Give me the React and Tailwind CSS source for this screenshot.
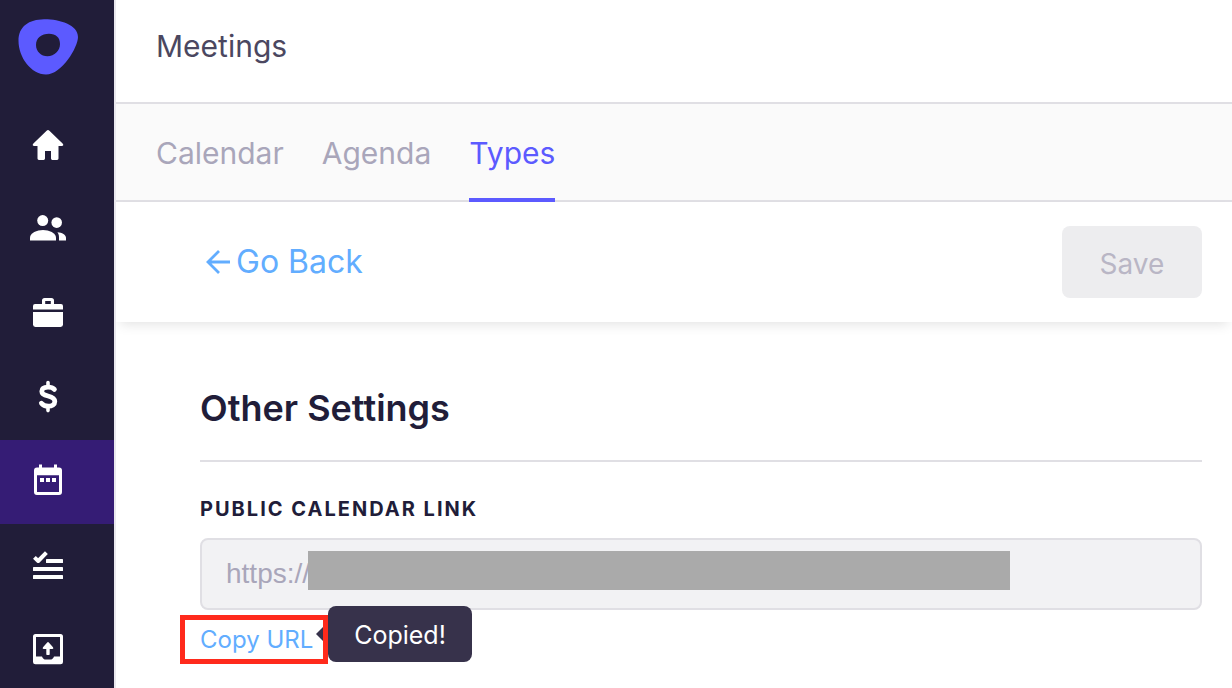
import { useState } from 'react';
import clsx from 'clsx';

const HomeIcon = () => (
    <path d="M16.6 2.7Q18 1.4 19.4 2.7L32.6 15.6Q34.4 17.9 31.6 18H28.5V30.6Q28.5 32 27.1 32H22.4Q21 32 21 30.6V23H15V30.6Q15 32 13.6 32H8.9Q7.5 32 7.5 30.6V18H4.4Q1.6 17.9 3.4 15.6Z" />
);

const PeopleIcon = () => (
    <>
        <circle cx="12.7" cy="8.6" r="5.5" />
        <circle cx="26.7" cy="10.6" r="5.3" />
        <path d="M0 28.6V25.5C0 21 7 18 13 18S26 21 26 25.5V28.6Z" />
        <path d="M27.4 20.3C32 20.6 36 22.8 36 25.8V28.6H29V25.5C29 23.2 28.4 21.7 27.4 20.3Z" />
    </>
);

const BriefcaseIcon = () => (
    <>
        <path fillRule="evenodd" d="M14.6 2H21.4Q24 2 24 4.6V8H31Q33 8 33 10V13.6H3V10Q3 8 5 8H12V4.6Q12 2 14.6 2ZM15.2 5V8H20.8V5Z" />
        <path d="M3 16H33V28.6Q33 31 30.6 31H5.4Q3 31 3 28.6Z" />
    </>
);

const DollarIcon = () => (
    <g fill="none" stroke="currentColor" strokeLinecap="round">
        <path strokeWidth="4.8" d="M24.4 9.4C23 7.8 21 7.1 18 7.1C14 7.1 11.8 8.8 11.8 11.3C11.8 14.2 14.4 15.2 18 16C22 17 24.8 18.4 24.8 21.4C24.8 24.4 22 26.2 18.2 26.2C15.2 26.2 13 25.2 11.4 23.2" />
        <path strokeWidth="3.6" d="M18 2.6V6M18 27V30.6" />
    </g>
);

const CalendarIcon = () => (
    <>
        <path fillRule="evenodd" d="M9 0.5H12V3.5H24V0.5H27V3.5H29Q32 3.5 32 6.5V28Q32 31 29 31H7Q4 31 4 28V6.5Q4 3.5 7 3.5H9ZM7 11.2V28H29V11.2Z" />
        <path d="M10 14H14V18H10ZM16 14H20V18H16ZM22 14H26V18H22Z" />
    </>
);

const ChecklistIcon = () => (
    <>
        <path fill="none" stroke="currentColor" strokeWidth="4" strokeLinejoin="round" d="M4.4 9.4L8.2 13L16.4 4.6" />
        <rect x="16" y="11" width="17" height="4" rx="0.6" />
        <rect x="3" y="19" width="30" height="4" rx="0.6" />
        <rect x="3" y="27" width="30" height="4" rx="0.6" />
    </>
);

const OutboxIcon = () => (
    <>
        <path fillRule="evenodd" d="M5.5 2H30.5Q33 2 33 4.5V30Q33 32.3 30.5 32.3H5.5Q3 32.3 3 30V4.5Q3 2 5.5 2ZM6 5V24.5H12C12.6 26.6 14 27.6 16 27.6H20C22 27.6 23.4 26.6 24 24.5H30V5Z" />
        <path d="M17.2 10.5Q18 9.7 18.8 10.5L23 15.2Q24 16.8 22.4 17H19.7V22.2Q19.7 23 19 23H17Q16.3 23 16.3 22.2V17H13.6Q12 16.8 13 15.2Z" />
    </>
);

const NAV_ITEMS = [
    { name: 'Home', Icon: HomeIcon },
    { name: 'People', Icon: PeopleIcon },
    { name: 'Accounts', Icon: BriefcaseIcon },
    { name: 'Opportunities', Icon: DollarIcon },
    { name: 'Meetings', Icon: CalendarIcon },
    { name: 'Tasks', Icon: ChecklistIcon },
    { name: 'Outbox', Icon: OutboxIcon },
];

const TABS = ['Calendar', 'Agenda', 'Types'];

const Sidebar = () => (
    <nav className="w-[116px] shrink-0 overflow-hidden border-r-2 border-[#e9e8ee] bg-[#211d39] text-white">
        <a href="#home" aria-label="Dashboard" className="flex h-[104px] pl-[18px] pt-[19px]">
            <svg viewBox="0 0 60 56" className="h-[56px] w-[60px]" fill="#5c5aff" fillRule="evenodd">
                <path d="M26 0.2C41 0 60 5.5 60 18C60 28 44 55.5 28 55.5C13 55.5 0.5 38 0.5 22C0.5 7 11 0.6 26 0.2ZM31 14.8C23.5 14.8 18 19 18 26C18 32.6 23.2 37.2 29.4 37.2C36.6 37.2 42 31.5 42 25C42 18.5 37.8 14.8 31 14.8Z" />
            </svg>
        </a>
        {NAV_ITEMS.map(({ name, Icon }) => (
            <a
                key={name}
                href={`#${name.toLowerCase()}`}
                aria-label={name}
                className={clsx('flex h-[84px] items-center pl-[30px]', name === 'Meetings' && 'bg-[#351c75]')}
            >
                <svg viewBox="0 0 36 36" className="h-9 w-9 overflow-visible" fill="currentColor">
                    <Icon />
                </svg>
            </a>
        ))}
    </nav>
);

export default function App() {
    const [tab, setTab] = useState('Types');
    const [copied, setCopied] = useState(true);

    return (
        <div className="flex h-screen overflow-hidden bg-white font-['Inter',sans-serif] text-[#211d39]">
            <Sidebar />

            <main className="min-w-0 flex-1 overflow-hidden">
                <header className="flex h-[104px] items-center border-b-2 border-[#e0dfe4] px-10 pb-2.5">
                    <h1 className="text-[30px] leading-9 text-[#4b4760]">Meetings</h1>
                </header>

                <div className="flex h-[98px] gap-[38px] border-b-2 border-[#e0dfe4] bg-[#fafafa] px-10">
                    {TABS.map((name) => (
                        <button
                            key={name}
                            type="button"
                            onClick={() => setTab(name)}
                            className={clsx(
                                '-mb-0.5 border-b-4 pt-1 text-[30px] leading-9',
                                name === tab ? 'border-[#5c5aff] text-[#5c5aff]' : 'border-transparent text-[#a9a6ba]'
                            )}
                        >
                            {name}
                        </button>
                    ))}
                </div>

                <div className="flex h-[120px] items-center justify-between pl-[90px] pr-[30px] shadow-[0_6px_12px_-4px_rgba(0,0,0,0.12)]">
                    <a href="#types" className="flex items-center gap-1.5 text-[32px] leading-9 text-[#62adff]">
                        <svg viewBox="0 0 24 24" className="h-6 w-6" fill="none" stroke="currentColor" strokeWidth="2.8">
                            <path d="M24 12H2M13 1L2 12L13 23" />
                        </svg>
                        Go Back
                    </a>
                    <button type="button" disabled className="h-[72px] w-[140px] rounded-lg bg-[#ededef] pt-1 text-[28px] text-[#b9b6c5]">
                        Save
                    </button>
                </div>

                <section className="pl-[84px] pr-[30px] pt-16">
                    <h2 className="border-b-2 border-[#e0dfe4] pb-[30px] text-[36px] font-semibold leading-11">Other Settings</h2>
                    <label htmlFor="calendar-link" className="mt-[33px] block text-[20px] font-bold uppercase leading-7 tracking-widest">
                        Public Calendar Link
                    </label>
                    <div className="relative mt-[15px]">
                        <input
                            id="calendar-link"
                            readOnly
                            value="https://"
                            className="block h-[72px] w-full rounded-lg border-2 border-[#e0dfe4] bg-[#f2f2f4] px-6 font-['Liberation_Sans',sans-serif] text-[28px] text-[#a9a6ba]"
                        />
                        <div className="absolute left-[108px] right-[192px] top-[13px] h-[39px] bg-[#aaaaaa]" />
                    </div>

                    <div className="relative mt-3 w-[128px]">
                        {copied && (
                            <div role="status" className="absolute -top-4 left-full flex h-14 w-36 items-center justify-center rounded-lg bg-[#37324b] pt-1 text-[25px] text-white">
                                <span className="absolute right-full top-4 border-y-[12px] border-r-[12px] border-y-transparent border-r-[#37324b]" />
                                Copied!
                            </div>
                        )}
                        <button type="button" onClick={() => setCopied(true)} className="block text-[24px] leading-9 whitespace-nowrap text-[#62adff]">
                            Copy URL
                        </button>
                        <span className="pointer-events-none absolute -left-5 right-0 -top-[7px] h-[49px] border-[5px] border-[#ff2a1c]" />
                    </div>
                </section>
            </main>
        </div>
    );
}
